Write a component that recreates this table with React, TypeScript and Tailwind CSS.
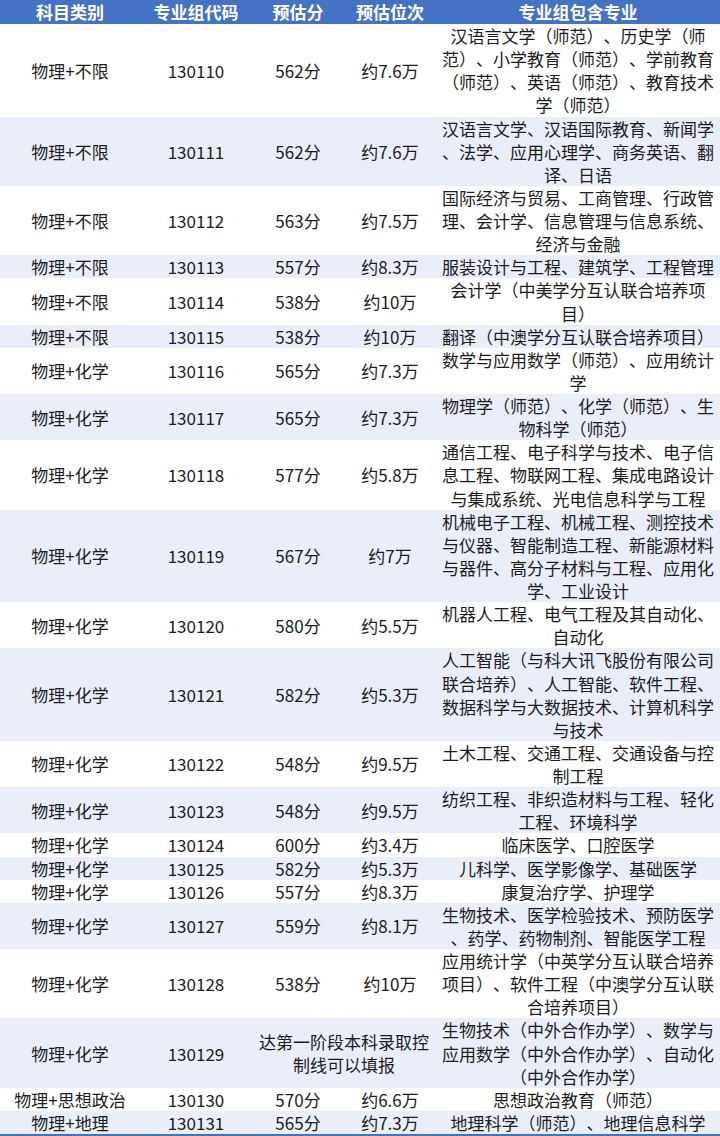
import React from 'react';

type Row = {
    subject: string;
    code: string;
    score: string;
    rank: string;
    majors: string[];
    merged?: string[];
};

const rows: Row[] = [
    { subject: '物理+不限', code: '130110', score: '562分', rank: '约7.6万', majors: ['汉语言文学（师范）、历史学（师', '范）、小学教育（师范）、学前教育', '（师范）、英语（师范）、教育技术', '学（师范）'] },
    { subject: '物理+不限', code: '130111', score: '562分', rank: '约7.6万', majors: ['汉语言文学、汉语国际教育、新闻学', '、法学、应用心理学、商务英语、翻', '译、日语'] },
    { subject: '物理+不限', code: '130112', score: '563分', rank: '约7.5万', majors: ['国际经济与贸易、工商管理、行政管', '理、会计学、信息管理与信息系统、', '经济与金融'] },
    { subject: '物理+不限', code: '130113', score: '557分', rank: '约8.3万', majors: ['服装设计与工程、建筑学、工程管理'] },
    { subject: '物理+不限', code: '130114', score: '538分', rank: '约10万', majors: ['会计学（中美学分互认联合培养项', '目）'] },
    { subject: '物理+不限', code: '130115', score: '538分', rank: '约10万', majors: ['翻译（中澳学分互认联合培养项目）'] },
    { subject: '物理+化学', code: '130116', score: '565分', rank: '约7.3万', majors: ['数学与应用数学（师范）、应用统计', '学'] },
    { subject: '物理+化学', code: '130117', score: '565分', rank: '约7.3万', majors: ['物理学（师范）、化学（师范）、生', '物科学（师范）'] },
    { subject: '物理+化学', code: '130118', score: '577分', rank: '约5.8万', majors: ['通信工程、电子科学与技术、电子信', '息工程、物联网工程、集成电路设计', '与集成系统、光电信息科学与工程'] },
    { subject: '物理+化学', code: '130119', score: '567分', rank: '约7万', majors: ['机械电子工程、机械工程、测控技术', '与仪器、智能制造工程、新能源材料', '与器件、高分子材料与工程、应用化', '学、工业设计'] },
    { subject: '物理+化学', code: '130120', score: '580分', rank: '约5.5万', majors: ['机器人工程、电气工程及其自动化、', '自动化'] },
    { subject: '物理+化学', code: '130121', score: '582分', rank: '约5.3万', majors: ['人工智能（与科大讯飞股份有限公司', '联合培养）、人工智能、软件工程、', '数据科学与大数据技术、计算机科学', '与技术'] },
    { subject: '物理+化学', code: '130122', score: '548分', rank: '约9.5万', majors: ['土木工程、交通工程、交通设备与控', '制工程'] },
    { subject: '物理+化学', code: '130123', score: '548分', rank: '约9.5万', majors: ['纺织工程、非织造材料与工程、轻化', '工程、环境科学'] },
    { subject: '物理+化学', code: '130124', score: '600分', rank: '约3.4万', majors: ['临床医学、口腔医学'] },
    { subject: '物理+化学', code: '130125', score: '582分', rank: '约5.3万', majors: ['儿科学、医学影像学、基础医学'] },
    { subject: '物理+化学', code: '130126', score: '557分', rank: '约8.3万', majors: ['康复治疗学、护理学'] },
    { subject: '物理+化学', code: '130127', score: '559分', rank: '约8.1万', majors: ['生物技术、医学检验技术、预防医学', '、药学、药物制剂、智能医学工程'] },
    { subject: '物理+化学', code: '130128', score: '538分', rank: '约10万', majors: ['应用统计学（中英学分互认联合培养', '项目）、软件工程（中澳学分互认联', '合培养项目）'] },
    { subject: '物理+化学', code: '130129', score: '', rank: '', merged: ['达第一阶段本科录取控', '制线可以填报'], majors: ['生物技术（中外合作办学）、数学与', '应用数学（中外合作办学）、自动化', '（中外合作办学）'] },
    { subject: '物理+思想政治', code: '130130', score: '570分', rank: '约6.6万', majors: ['思想政治教育（师范）'] },
    { subject: '物理+地理', code: '130131', score: '565分', rank: '约7.3万', majors: ['地理科学（师范）、地理信息科学'] },
];

const Lines: React.FC<{ lines: string[] }> = ({ lines }) => (
    <div className="text-center">
        {lines.map((l, i) => (
            <div key={i} className="whitespace-nowrap">{l}</div>
        ))}
    </div>
);

const App: React.FC = () => {
    return (
        <div className="w-[720px] h-[1136px] overflow-hidden bg-white text-[17px] leading-[23.125px] text-[#1c1c1c] font-['Noto_Sans_CJK_SC',sans-serif] [text-spacing-trim:space-all]">
            <div className="flex h-[24px] items-center bg-[#4472c4] text-white font-bold">
                <div className="w-[140px] text-center">科目类别</div>
                <div className="w-[112px] text-center">专业组代码</div>
                <div className="w-[92px] text-center">预估分</div>
                <div className="w-[92px] text-center">预估位次</div>
                <div className="flex-1 text-center">专业组包含专业</div>
            </div>

            <div className="border-b-2 border-[#4472c4]">
                {rows.map((r, i) => (
                    <div key={r.code} className={`flex items-center ${i % 2 === 1 ? 'bg-[#e9eef8]' : 'bg-white'}`}>
                        <div className="w-[140px] text-center whitespace-nowrap">{r.subject}</div>
                        <div className="w-[112px] text-center">{r.code}</div>
                        {r.merged ? (
                            <div className="w-[184px]">
                                <Lines lines={r.merged} />
                            </div>
                        ) : (
                            <>
                                <div className="w-[92px] text-center">{r.score}</div>
                                <div className="w-[92px] text-center">{r.rank}</div>
                            </>
                        )}
                        <div className="flex-1">
                            <Lines lines={r.majors} />
                        </div>
                    </div>
                ))}
            </div>
        </div>
    );
};

export default App;
